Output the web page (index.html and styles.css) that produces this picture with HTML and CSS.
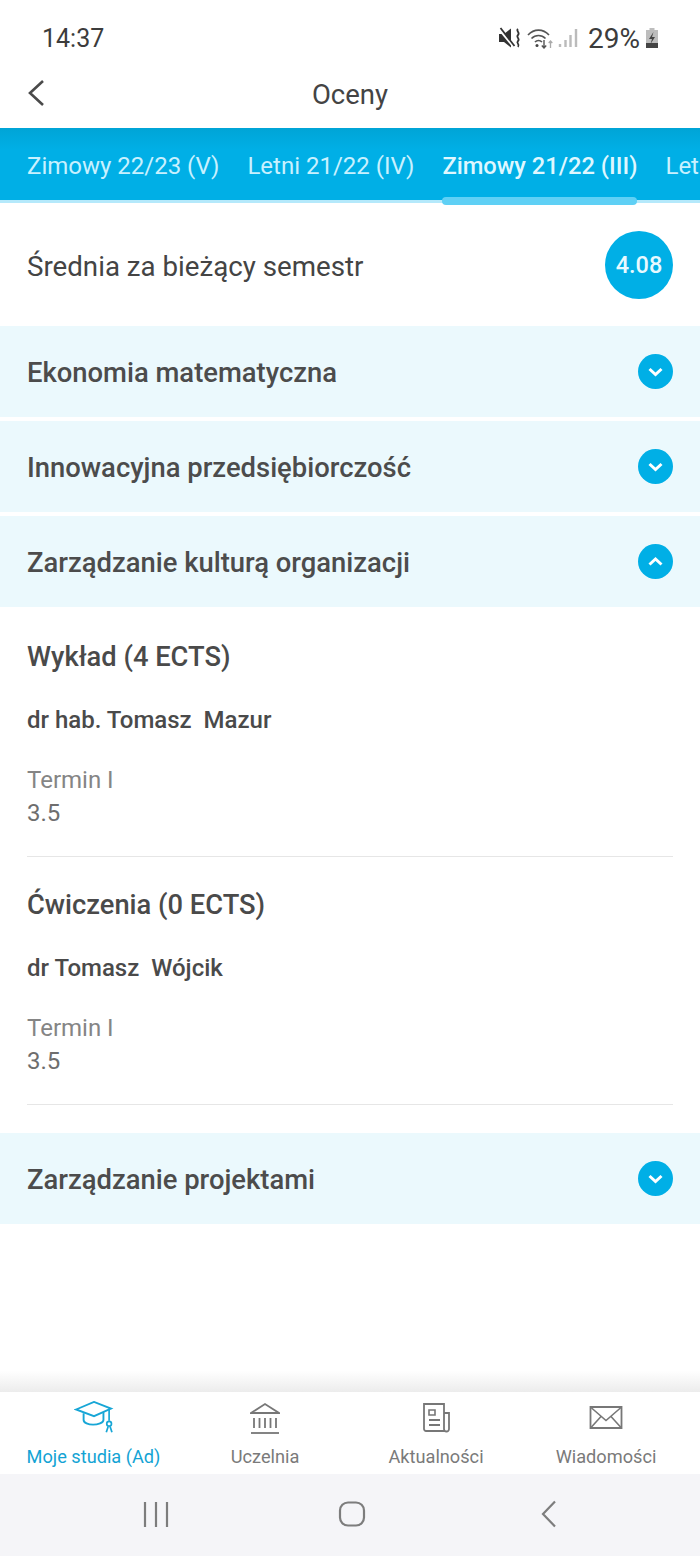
FILE: index.html
```html
<!DOCTYPE html>
<html lang="pl">
<head>
    <meta charset="UTF-8">
    <meta name="viewport" content="width=device-width, initial-scale=1.0">
    <title>Oceny</title>
    <link rel="stylesheet" href="styles.css">
</head>
<body>
<div class="screen">
    <!-- Status bar -->
    <div class="statusBar">
        <span class="clock">14:37</span>
        <div class="statusIcons">
            <svg class="muteIcon" width="23" height="22" viewBox="0 0 23 22">
                <path d="M1 7h5l7-5.500v19L6 15H1z" fill="#333"/>
                <path d="M1 2l14 17" stroke="#fff" stroke-width="2.400"/>
                <path d="M2.500 1l14 18" stroke="#333" stroke-width="1.800"/>
                <path d="M20 2c-2.500 2 2.500 3.500 0 6s2.500 3.500 0 6 2.500 3 0 6" fill="none" stroke="#333" stroke-width="1.800"/>
            </svg>
            <svg class="wifiIcon" width="27" height="22" viewBox="0 0 27 22">
                <path d="M1 8c6-6.500 15-6.500 21 0M4.500 11.500c4-4 10-4 14 0M8 15c2-2 5-2 7 0" fill="none" stroke="#555" stroke-width="1.700"/>
                <circle cx="10" cy="18.500" r="1.500" fill="#444"/>
                <path d="M17 13v8M14.800 18.500l2.200 2.500 2.200-2.500" fill="none" stroke="#555" stroke-width="1.400"/>
                <path d="M23.500 21v-7M21.700 16l1.800-2 1.800 2" fill="none" stroke="#aaa" stroke-width="1.300"/>
            </svg>
            <svg class="signalIcon" width="20" height="22" viewBox="0 0 20 22">
                <path d="M2 20v-3M7.500 20v-7M12.500 20V8M18 20V2" stroke="#bbb" stroke-width="2.400"/>
            </svg>
            <span class="battery">29%</span>
            <svg class="batteryIcon" width="14" height="20" viewBox="0 0 14 20">
                <path d="M4.500 0h5v2h3.500v18H1V2h3.500z" fill="#bdbdbd"/>
                <path d="M1 15h12v5H1z" fill="#444"/>
                <path d="M8.500 4L4 11h3l-1.500 5L10 9H7z" fill="#444"/>
            </svg>
        </div>
    </div>

    <!-- Header -->
    <div class="topBar">
        <svg class="backIcon" width="18" height="28" viewBox="0 0 18 28">
            <path d="M16 2L3 14l13 12" fill="none" stroke="#4a4a4a" stroke-width="2.600"/>
        </svg>
        <h1>Oceny</h1>
    </div>

    <!-- Semester tabs -->
    <div class="tabs">
        <span class="tab">Zimowy 22/23 (V)</span>
        <span class="tab">Letni 21/22 (IV)</span>
        <span class="tab active">Zimowy 21/22 (III)</span>
        <span class="tab">Letni 20/21 (II)</span>
    </div>

    <div class="average">
        <span class="averageLabel">Średnia za bieżący semestr</span>
        <span class="averageValue">4.08</span>
    </div>

    <div class="courses">
        <div class="course">
            <span>Ekonomia matematyczna</span>
            <svg class="toggle" width="35" height="35" viewBox="0 0 35 35"><circle cx="17.500" cy="17.500" r="17.500" fill="#00afe6"/><path d="M11.500 15l6 5.500 6-5.500" fill="none" stroke="#fff" stroke-width="3"/></svg>
        </div>
        <div class="course">
            <span>Innowacyjna przedsiębiorczość</span>
            <svg class="toggle" width="35" height="35" viewBox="0 0 35 35"><circle cx="17.500" cy="17.500" r="17.500" fill="#00afe6"/><path d="M11.500 15l6 5.500 6-5.500" fill="none" stroke="#fff" stroke-width="3"/></svg>
        </div>
        <div class="course">
            <span>Zarządzanie kulturą organizacji</span>
            <svg class="toggle" width="35" height="35" viewBox="0 0 35 35"><circle cx="17.500" cy="17.500" r="17.500" fill="#00afe6"/><path d="M11.500 20.500l6-5.500 6 5.500" fill="none" stroke="#fff" stroke-width="3"/></svg>
        </div>

        <div class="courseDetails">
            <div class="classBlock">
                <h2>Wykład (4 ECTS)</h2>
                <p class="teacher">dr hab. Tomasz&nbsp; Mazur</p>
                <p class="term">Termin I</p>
                <p class="grade">3.5</p>
            </div>
            <div class="classBlock">
                <h2>Ćwiczenia (0 ECTS)</h2>
                <p class="teacher">dr Tomasz&nbsp; Wójcik</p>
                <p class="term">Termin I</p>
                <p class="grade">3.5</p>
            </div>
        </div>

        <div class="course">
            <span>Zarządzanie projektami</span>
            <svg class="toggle" width="35" height="35" viewBox="0 0 35 35"><circle cx="17.500" cy="17.500" r="17.500" fill="#00afe6"/><path d="M11.500 15l6 5.500 6-5.500" fill="none" stroke="#fff" stroke-width="3"/></svg>
        </div>
    </div>

    <div class="spacer"></div>

    <!-- Bottom navigation -->
    <div class="bottomNav">
        <div class="navItem current">
            <svg width="40" height="36" viewBox="0 0 40 36">
                <path d="M1 9L20 1l18 7-18 8z" fill="none" stroke="#17a6d6" stroke-width="2"/>
                <path d="M9 13v7c0 3 5 5 10 5s11-2 11-5v-8" fill="none" stroke="#17a6d6" stroke-width="2"/>
                <path d="M36 9v12" stroke="#17a6d6" stroke-width="1.800"/>
                <circle cx="36" cy="24" r="2.500" fill="none" stroke="#17a6d6" stroke-width="1.800"/>
                <path d="M35 27l-2 6M37 27l2 6" stroke="#17a6d6" stroke-width="1.800"/>
            </svg>
            <span>Moje studia (Ad)</span>
        </div>
        <div class="navItem">
            <svg width="30" height="32" viewBox="0 0 30 32">
                <path d="M1 11L15 2l14 9zM1 11h28" fill="none" stroke="#777" stroke-width="1.800"/>
                <path d="M4 16v10M9.500 16v10M15 16v10M20.500 16v10M26 16v10" stroke="#777" stroke-width="1.800"/>
                <path d="M1 31h28" stroke="#777" stroke-width="1.800"/>
            </svg>
            <span>Uczelnia</span>
        </div>
        <div class="navItem">
            <svg width="30" height="32" viewBox="-2 0 30 32">
                <path d="M22 29H3a2 2 0 0 1-2-2V2h20v25a2.500 2.500 0 0 0 5 0V11h-5" fill="none" stroke="#777" stroke-width="1.800"/>
                <path d="M6 8h6v5H6z" fill="none" stroke="#777" stroke-width="1.600"/>
                <path d="M6 18h11M6 23h11" stroke="#777" stroke-width="1.800"/>
            </svg>
            <span>Aktualności</span>
        </div>
        <div class="navItem">
            <svg width="34" height="32" viewBox="0 0 34 32">
                <path d="M1.500 5h31v21h-31z" fill="none" stroke="#777" stroke-width="1.800"/>
                <path d="M2 5.500l15 13 15-13M2 25.500l10-11M32 25.500l-10-11" fill="none" stroke="#777" stroke-width="1.600"/>
            </svg>
            <span>Wiadomości</span>
        </div>
    </div>

    <!-- System navigation -->
    <div class="systemNav">
        <svg width="28" height="28" viewBox="0 0 28 28"><path d="M3 2v25M14 2v25M25 2v25" stroke="#7d7d7d" stroke-width="2.200"/></svg>
        <svg class="homeButton" width="28" height="28" viewBox="0 0 28 28"><rect x="2" y="2.500" width="24" height="23" rx="8" fill="none" stroke="#7d7d7d" stroke-width="2.200"/></svg>
        <svg width="18" height="28" viewBox="0 0 18 28"><path d="M15 1.500L3 14l12 12.500" fill="none" stroke="#7d7d7d" stroke-width="2.200"/></svg>
    </div>
</div>
</body>
</html>
```

FILE: styles.css
```css
* {
    box-sizing: border-box;
}
html, body {
    margin: 0;
    padding: 0;
}
body {
    background-color: white;
    color: #444;
    font-family: Roboto, "Liberation Sans", sans-serif;
}
.screen {
    width: 700px;
    height: 1556px;
    display: flex;
    flex-direction: column;
    overflow: hidden;
}
.statusBar {
    height: 66px;
    padding: 10px 41px 0 42px;
    display: flex;
    align-items: center;
    justify-content: space-between;
    color: #3c3c3c;
}
.clock {
    font-size: 25px;
}
.statusIcons {
    display: flex;
    align-items: center;
}
.muteIcon {
    margin-right: 6px;
}
.wifiIcon {
    margin-right: 4px;
}
.battery {
    font-size: 28px;
    margin-left: 10px;
}
.batteryIcon {
    margin-left: 5px;
}
.topBar {
    height: 62px;
    position: relative;
    display: flex;
    align-items: center;
    justify-content: center;
    padding-bottom: 6px;
}
.topBar h1 {
    margin: 0;
    font-size: 27.5px;
    font-weight: 400;
    color: #444;
}
.backIcon {
    position: absolute;
    left: 27px;
    top: 13px;
}
/* band is 72px blue + 3px light line, the extra 2px lets the active marker hang below */
.tabs {
    height: 77px;
    margin-bottom: -2px;
    padding-left: 27px;
    display: flex;
    gap: 28px;
    white-space: nowrap;
    overflow: hidden;
    background:
        linear-gradient(white, white) 0 75px / 100% 2px no-repeat,
        linear-gradient(#b5e9fb, #b5e9fb) 0 72px / 100% 3px no-repeat,
        linear-gradient(#00a4d6, #00afe6 22px) 0 0 / 100% 72px no-repeat;
}
.tab {
    height: 72px;
    padding-top: 24px;
    font-size: 24px;
    color: #c8f1ff;
    flex-shrink: 0;
}
.tab.active {
    font-size: 23.7px;
    font-weight: 500;
    color: #dff7ff;
    position: relative;
}
.tab.active::after {
    content: "";
    position: absolute;
    left: 0;
    right: 0;
    bottom: -5px;
    height: 8px;
    border-radius: 4px;
    background-color: #5fd0f5;
}
.average {
    height: 123px;
    padding: 0 27px;
    display: flex;
    align-items: center;
    justify-content: space-between;
}
.averageLabel {
    font-size: 27.7px;
    padding-top: 3px;
}
.averageValue {
    width: 68px;
    height: 68px;
    border-radius: 50%;
    background-color: #00afe6;
    color: #e8f9ff;
    font-size: 23.5px;
    font-weight: 500;
    display: flex;
    align-items: center;
    justify-content: center;
}
.course {
    height: 91px;
    margin-bottom: 4px;
    padding: 0 27px;
    display: flex;
    align-items: center;
    justify-content: space-between;
    background-color: #ebf9fd;
    font-size: 27.4px;
    font-weight: 500;
    color: #4c4c4c;
}
.course span {
    padding-top: 2px;
}
.courseDetails {
    margin-top: -4px;
    padding: 0 27px;
    margin-bottom: 28px;
}
.classBlock {
    height: 248px;
    padding-top: 31px;
    border-bottom: 1px solid #e6e6e6;
}
.classBlock:first-child {
    height: 250px;
    padding-top: 33px;
}
.classBlock h2 {
    margin: 0;
    font-size: 27.3px;
    line-height: 34px;
    font-weight: 500;
    color: #4a4a4a;
}
.teacher {
    margin: 32px 0 0 0;
    font-size: 24px;
    line-height: 28px;
    font-weight: 500;
    color: #4a4a4a;
}
.term {
    margin: 30px 0 0 0;
    font-size: 24px;
    line-height: 33px;
    color: #858585;
}
.grade {
    margin: 0;
    font-size: 24px;
    line-height: 33px;
    color: #6e6e6e;
}
.spacer {
    flex: 1;
    background: linear-gradient(white 87%, #ececec);
}
.bottomNav {
    height: 82px;
    display: grid;
    grid-template-columns: 187px 156px 186px 154px;
    background-color: white;
}
.navItem {
    display: flex;
    flex-direction: column;
    align-items: center;
    font-size: 18.2px;
    color: #7a7a7a;
}
.navItem svg {
    height: 34px;
    margin-top: 9px;
}
.navItem span {
    margin-top: 10px;
    line-height: 24px;
    white-space: nowrap;
}
.navItem.current {
    color: #13a3d4;
}
.systemNav {
    height: 82px;
    padding: 0 0 3px 142px;
    display: flex;
    align-items: center;
    background-color: #f5f5f8;
}
.homeButton {
    margin: 0 174px 0 168px;
}
```
